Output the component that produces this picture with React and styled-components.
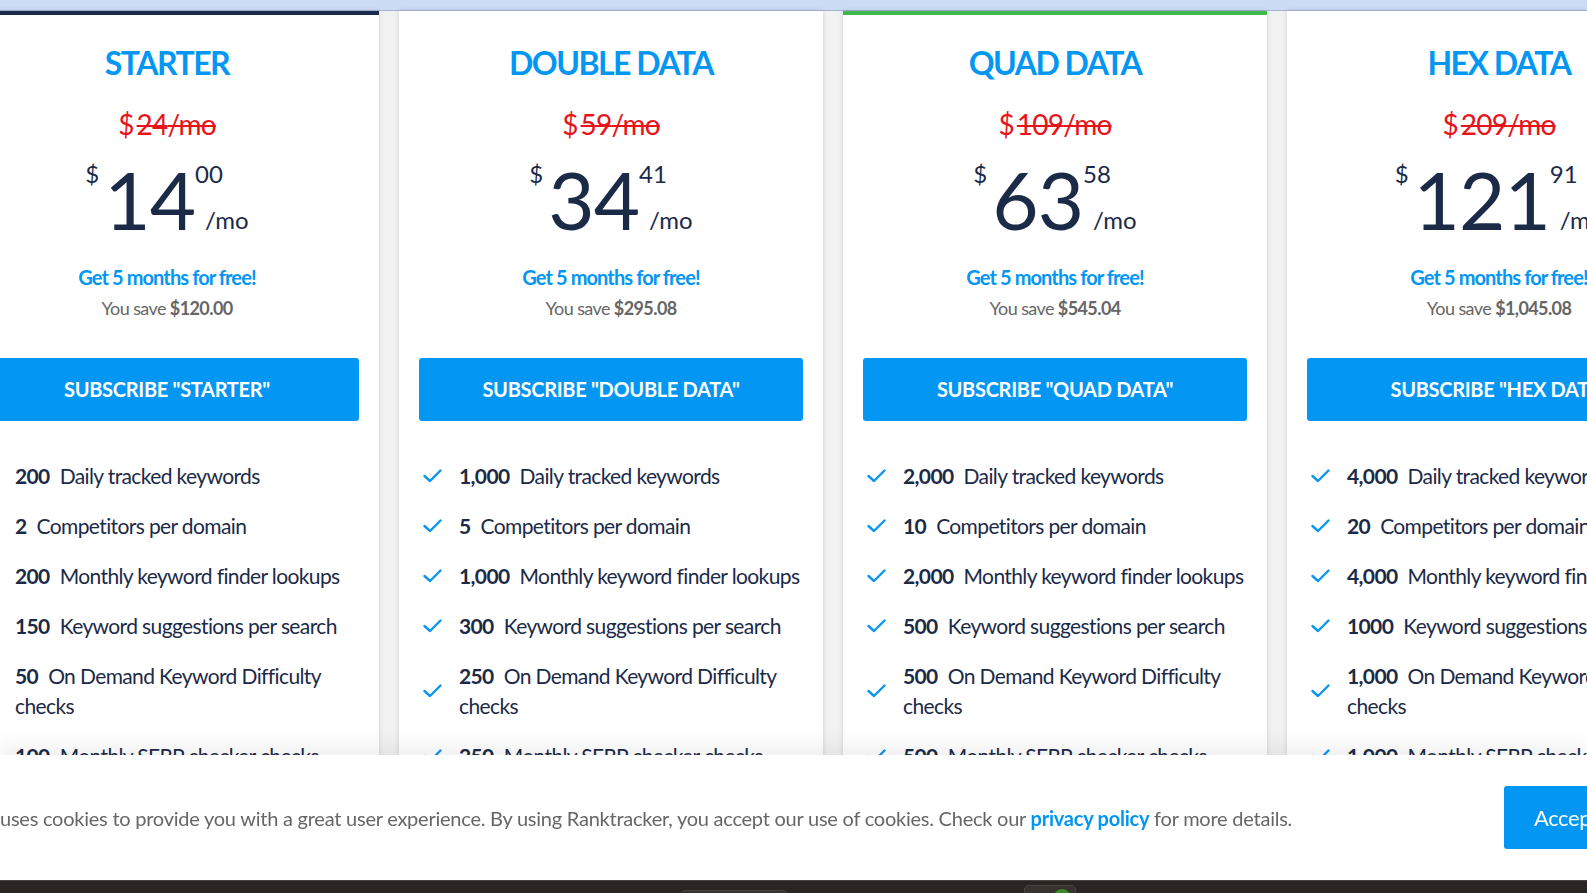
import React from 'react';
import styled, { createGlobalStyle } from 'styled-components';

const GlobalStyle = createGlobalStyle`
  html, body {
    margin: 0;
    padding: 0;
    height: 100%;
    overflow: hidden;
    background: #f2f2f2;
    font-family: 'Lato', 'Open Sans', sans-serif;
  }
`;

const Page = styled.div`
  width: 100%;
  height: 893px;
  overflow: hidden;
  background: #f2f2f2;
`;

const TopBand = styled.div`
  height: 10px;
  background: #cbdcf4;
  border-bottom: 1px solid #a3b5d3;
`;

const CardsRow = styled.div`
  display: flex;
  gap: 20px;
  margin-left: -45px;
`;

const Card = styled.div`
  flex: 0 0 424px;
  box-sizing: border-box;
  background: #fff;
  border-top: 4px solid ${({ accent }) => accent || '#fff'};
  box-shadow: 0 0 5px rgba(0, 0, 0, 0.14);
  padding: 29px 20px 40px;
  display: flex;
  flex-direction: column;
  align-items: center;
  height: 900px;
`;

const PlanName = styled.div`
  font-size: 32px;
  line-height: 1.2;
  font-weight: 700;
  color: #0396f3;
  letter-spacing: -1.5px;
`;

const OldPrice = styled.div`
  margin-top: 26px;
  font-size: 28px;
  line-height: 1.2;
  color: #e8141b;
  letter-spacing: -0.8px;
  display: flex;
  align-items: baseline;
`;

const Struck = styled.span`
  display: inline-block;
  margin-left: 3px;
  text-decoration: line-through;
  text-decoration-thickness: 2px;
`;

const PriceRow = styled.div`
  margin-top: 17px;
  display: flex;
  align-items: flex-start;
  color: #1b2a47;
`;

const Dollar = styled.div`
  font-size: 24px;
  line-height: 1;
  margin: 3px 5px 0 0;
`;

const Amount = styled.div`
  font-size: 80px;
  line-height: 1;
  letter-spacing: -1px;
`;

const Side = styled.div`
  display: flex;
  flex-direction: column;
  font-size: 24px;
  line-height: 1;
  margin-top: 3px;
`;

const Per = styled.div`
  margin-top: 22px;
  margin-left: 10px;
`;

const Promo = styled.div`
  margin-top: 26px;
  font-size: 20px;
  line-height: 1.2;
  font-weight: 700;
  color: #0396f3;
  letter-spacing: -0.9px;
`;

const Save = styled.div`
  margin-top: 9px;
  font-size: 18px;
  line-height: 1.2;
  color: #666;
  letter-spacing: -0.6px;

  b {
    font-weight: 700;
  }
`;

const SubscribeButton = styled.button`
  margin-top: 38px;
  align-self: stretch;
  height: 63px;
  border: none;
  border-radius: 3px;
  background: #0396f3;
  color: #fff;
  font-family: inherit;
  font-size: 20px;
  font-weight: 700;
  letter-spacing: -0.3px;
  cursor: pointer;
`;

const FeatureList = styled.ul`
  list-style: none;
  margin: 40px -14px 0 0;
  padding: 0 0 0 4px;
  align-self: stretch;
  display: flex;
  flex-direction: column;
  gap: 20px;
`;

const Feature = styled.li`
  display: flex;
  align-items: center;
  font-size: 21px;
  line-height: 30px;
  color: #1b2a47;
  letter-spacing: -0.62px;
`;

const CheckSlot = styled.span`
  flex: 0 0 36px;
  display: flex;
  align-items: center;
`;

const FeatureText = styled.span`
  flex: 1;

  b {
    font-weight: 700;
    margin-right: 10px;
  }
`;

const Dock = styled.div`
  position: fixed;
  left: 0;
  right: 0;
  bottom: 0;
  display: flex;
  flex-direction: column;
`;

const Banner = styled.div`
  height: 125px;
  background: #fff;
  box-shadow: 0 -8px 22px rgba(0, 0, 0, 0.07);
  overflow: hidden;
`;

const BannerInner = styled.div`
  width: 1654px;
  height: 100%;
  display: flex;
  align-items: center;
`;

const CookieText = styled.p`
  flex: 1;
  margin: 0;
  font-size: 20px;
  color: #666;
  letter-spacing: -0.24px;
  white-space: nowrap;

  a {
    color: #0396f3;
    font-weight: 700;
    text-decoration: none;
  }
`;

const AcceptButton = styled.button`
  flex: 0 0 150px;
  height: 63px;
  border: none;
  border-radius: 3px;
  background: #0396f3;
  color: #fff;
  font-family: inherit;
  font-size: 22px;
  text-align: left;
  padding-left: 30px;
  letter-spacing: -0.4px;
`;

const Taskbar = styled.div`
  height: 13px;
  background: #2a2522;
  border-top: 1px solid #4a4441;
  box-sizing: border-box;
  display: flex;
  align-items: flex-start;
  overflow: hidden;
`;

const TaskItem = styled.div`
  width: ${({ w }) => w}px;
  height: 20px;
  margin-left: ${({ ml }) => ml}px;
  margin-top: ${({ mt }) => mt}px;
  border-radius: 5px;
  background: #38322f;
  border: 1px solid #4b4542;
  position: relative;
`;

const Dot = styled.span`
  position: absolute;
  left: 28px;
  top: 3px;
  width: 18px;
  height: 18px;
  border-radius: 50%;
  background: #3b8a27;
`;

const Check = () => (
  <svg width="19" height="14" viewBox="0 0 19 14" fill="none">
    <polyline points="1.5,7 7,12 17.5,1.5" stroke="#0b96f0" strokeWidth="2.4" strokeLinecap="round" strokeLinejoin="round" />
  </svg>
);

const plans = [
  {
    name: 'STARTER', old: '24', whole: '14', cents: '00', save: '$120.00', accent: '#1b2a4a', checks: false,
    features: [
      ['200', 'Daily tracked keywords'],
      ['2', 'Competitors per domain'],
      ['200', 'Monthly keyword finder lookups'],
      ['150', 'Keyword suggestions per search'],
      ['50', 'On Demand Keyword Difficulty checks'],
      ['100', 'Monthly SERP checker checks'],
    ],
  },
  {
    name: 'DOUBLE DATA', old: '59', whole: '34', cents: '41', save: '$295.08', checks: true,
    features: [
      ['1,000', 'Daily tracked keywords'],
      ['5', 'Competitors per domain'],
      ['1,000', 'Monthly keyword finder lookups'],
      ['300', 'Keyword suggestions per search'],
      ['250', 'On Demand Keyword Difficulty checks'],
      ['250', 'Monthly SERP checker checks'],
    ],
  },
  {
    name: 'QUAD DATA', old: '109', whole: '63', cents: '58', save: '$545.04', accent: '#3dba4b', checks: true,
    features: [
      ['2,000', 'Daily tracked keywords'],
      ['10', 'Competitors per domain'],
      ['2,000', 'Monthly keyword finder lookups'],
      ['500', 'Keyword suggestions per search'],
      ['500', 'On Demand Keyword Difficulty checks'],
      ['500', 'Monthly SERP checker checks'],
    ],
  },
  {
    name: 'HEX DATA', old: '209', whole: '121', cents: '91', save: '$1,045.08', checks: true,
    features: [
      ['4,000', 'Daily tracked keywords'],
      ['20', 'Competitors per domain'],
      ['4,000', 'Monthly keyword finder lookups'],
      ['1000', 'Keyword suggestions per search'],
      ['1,000', 'On Demand Keyword Difficulty checks'],
      ['1,000', 'Monthly SERP checker checks'],
    ],
  },
];

const PlanCard = ({ plan }) => (
  <Card accent={plan.accent}>
    <PlanName>{plan.name}</PlanName>
    <OldPrice>$<Struck>{plan.old}/mo</Struck></OldPrice>
    <PriceRow>
      <Dollar>$</Dollar>
      <Amount>{plan.whole}</Amount>
      <Side>
        <div>{plan.cents}</div>
        <Per>/mo</Per>
      </Side>
    </PriceRow>
    <Promo>Get 5 months for free!</Promo>
    <Save>You save <b>{plan.save}</b></Save>
    <SubscribeButton>SUBSCRIBE "{plan.name}"</SubscribeButton>
    <FeatureList>
      {plan.features.map(([num, label]) => (
        <Feature key={label}>
          <CheckSlot>{plan.checks && <Check />}</CheckSlot>
          <FeatureText><b>{num}</b>{label}</FeatureText>
        </Feature>
      ))}
    </FeatureList>
  </Card>
);

export default function App() {
  return (
    <Page>
      <GlobalStyle />
      <TopBand />
      <CardsRow>
        {plans.map((p) => (
          <PlanCard key={p.name} plan={p} />
        ))}
      </CardsRow>
      <Dock>
        <Banner>
          <BannerInner>
            <CookieText>
              uses cookies to provide you with a great user experience. By using Ranktracker, you accept our use of cookies. Check our <a href="#">privacy policy</a> for more details.
            </CookieText>
            <AcceptButton>Accept</AcceptButton>
          </BannerInner>
        </Banner>
        <Taskbar>
          <TaskItem w={106} ml={680} mt={9} />
          <TaskItem w={50} ml={236} mt={4}>
            <Dot />
          </TaskItem>
        </Taskbar>
      </Dock>
    </Page>
  );
}
